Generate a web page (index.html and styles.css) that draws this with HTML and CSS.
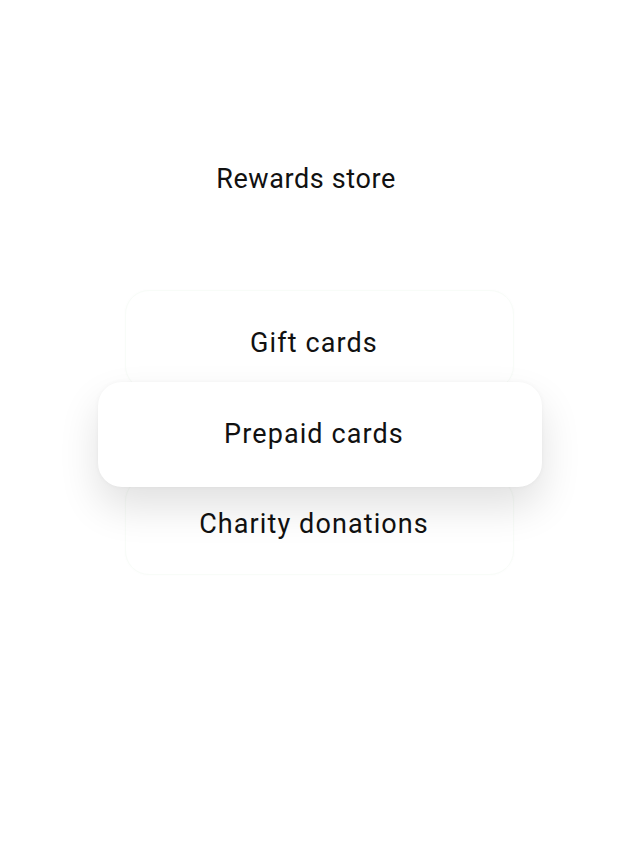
FILE: index.html
```html
<!DOCTYPE html>
<html>
<head>
<meta charset="utf-8">
<link rel="stylesheet" href="styles.css">
</head>
<body>
<main class="page">
  <h1 class="title">Rewards store</h1>
  <div class="stack">
    <div class="card card-back card-top">Gift cards</div>
    <div class="card card-front">Prepaid cards</div>
    <div class="card card-back card-bottom">Charity donations</div>
  </div>
</main>
</body>
</html>
```

FILE: styles.css
```css
html, body {
  margin: 0;
  padding: 0;
  background: #ffffff;
}
.page {
  width: 640px;
  height: 852px;
  display: flex;
  flex-direction: column;
  align-items: center;
  font-family: Roboto, "Liberation Sans", sans-serif;
  color: #111111;
}
.title {
  margin: 164px 0 0 -28px;
  font-size: 27px;
  font-weight: 400;
  line-height: 30px;
  letter-spacing: 0.6px;
}
.stack {
  margin-top: 96px;
  display: flex;
  flex-direction: column;
  align-items: center;
  margin-left: -1px;
}
.card {
  display: flex;
  align-items: center;
  justify-content: center;
  font-size: 27px;
  line-height: 30px;
  letter-spacing: 1.1px;
  background: #ffffff;
  border-radius: 24px;
  box-sizing: border-box;
  padding-right: 11px;
}
.card-back {
  width: 389px;
  border: 1px solid #f8fcf8;
  box-shadow: 0 0 6px rgba(0, 0, 0, 0.012);
}
.card-top {
  height: 100px;
  padding-top: 5px;
}
.card-front {
  position: relative;
  z-index: 2;
  width: 444px;
  height: 105px;
  margin-top: -8px;
  padding-bottom: 1px;
  box-shadow: 0 20px 40px rgba(0, 0, 0, 0.12), 0 0 5px rgba(0, 0, 0, 0.04);
}
.card-bottom {
  height: 98px;
  margin-top: -10px;
  padding-bottom: 4px;
}
```
